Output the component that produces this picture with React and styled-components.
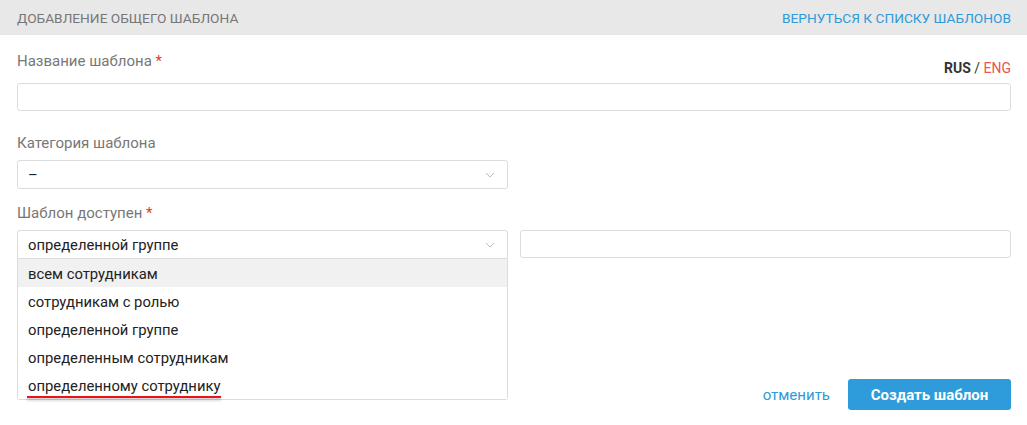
import React from "react";
import styled, { createGlobalStyle } from "styled-components";

const options = [
  "всем сотрудникам",
  "сотрудникам с ролью",
  "определенной группе",
  "определенным сотрудникам",
  "определенному сотруднику",
];

function Chevron() {
  return (
    <ChevronIcon width="10" height="6" viewBox="0 0 10 6">
      <path d="M1 1l4 4 4-4" fill="none" stroke="#bdbdbd" strokeWidth="1" />
    </ChevronIcon>
  );
}

export default function App() {
  return (
    <Page>
      <GlobalStyle />
      <Header>
        <HeaderTitle>Добавление общего шаблона</HeaderTitle>
        <BackLink>Вернуться к списку шаблонов</BackLink>
      </Header>
      <Form>
        <LabelRow>
          <Label>
            Название шаблона <Req>*</Req>
          </Label>
          <Lang>
            RUS <span>/</span> <Eng>ENG</Eng>
          </Lang>
        </LabelRow>
        <TextInput />

        <Label spaced>Категория шаблона</Label>
        <Half>
          <Select>
            <SelectValue>–</SelectValue>
            <Chevron />
          </Select>
        </Half>

        <Label spaced small>
          Шаблон доступен <Req>*</Req>
        </Label>
        <Pair>
          <SelectWrap>
            <Select open>
              <SelectValue>определенной группе</SelectValue>
              <Chevron />
            </Select>
            <Menu>
              {options.map((o, i) => (
                <Option key={o} active={i === 0}>
                  {i === options.length - 1 ? <Marked>{o}</Marked> : o}
                </Option>
              ))}
            </Menu>
          </SelectWrap>
          <TextInput />
        </Pair>

        <Footer>
          <CancelLink>отменить</CancelLink>
          <SubmitBtn>Создать шаблон</SubmitBtn>
        </Footer>
      </Form>
    </Page>
  );
}

const GlobalStyle = createGlobalStyle`
  body {
    margin: 0;
    background: #fff;
    font-family: Roboto, "Noto Sans", sans-serif;
  }
`;

const Page = styled.div`
  width: 1027px;
  height: 425px;
  overflow: hidden;
`;

const Header = styled.div`
  display: flex;
  justify-content: space-between;
  align-items: center;
  height: 35px;
  padding: 0 16px 0 17px;
  background: #e8e8e8;
`;

const HeaderTitle = styled.div`
  font-size: 13.7px;
  color: #777;
  text-transform: uppercase;
`;

const BackLink = styled.a`
  font-size: 13.7px;
  color: #2f9ad8;
  text-transform: uppercase;
  cursor: pointer;
`;

const Form = styled.div`
  padding: 16px 16px 0 17px;
`;

const LabelRow = styled.div`
  display: flex;
  justify-content: space-between;
  align-items: flex-end;
  height: 32px;
`;

const Label = styled.div`
  align-self: flex-start;
  font-size: 15px;
  line-height: 20px;
  color: #777;
  margin-top: ${(p) => (p.spaced ? (p.small ? "14px" : "22px") : "0")};
  margin-bottom: ${(p) => (p.spaced ? "7px" : "0")};
`;

const Req = styled.span`
  color: #e53935;
`;

const Lang = styled.div`
  font-size: 14px;
  line-height: 16px;
  font-weight: 700;
  color: #333;
  margin-bottom: 7px;
  span {
    font-weight: 400;
  }
`;

const Eng = styled.b`
  font-weight: 400;
  color: #f0524f;
`;

const TextInput = styled.input`
  display: block;
  box-sizing: border-box;
  width: 100%;
  height: 28px;
  border: 1px solid #dcdcdc;
  border-radius: 3px;
  outline: none;
`;

const Half = styled.div`
  width: 491px;
`;

const Pair = styled.div`
  display: grid;
  grid-template-columns: 491px 491px;
  gap: 12px;
  align-items: start;
`;

const SelectWrap = styled.div`
  position: relative;
`;

const Select = styled.div`
  display: flex;
  align-items: center;
  justify-content: space-between;
  box-sizing: border-box;
  height: 29px;
  padding: 1px 12px 0 10px;
  border: 1px solid #dcdcdc;
  border-radius: ${(p) => (p.open ? "3px 3px 0 0" : "3px")};
`;

const SelectValue = styled.span`
  font-size: 14.8px;
  color: #222;
`;

const ChevronIcon = styled.svg`
  display: block;
`;

const Menu = styled.div`
  position: absolute;
  top: 29px;
  left: 0;
  right: 0;
  box-sizing: border-box;
  border: 1px solid #dcdcdc;
  border-top: none;
  border-radius: 0 0 3px 3px;
  background: #fff;
  z-index: 2;
`;

const Option = styled.div`
  box-sizing: border-box;
  height: 28px;
  line-height: 28px;
  padding: 1px 0 0 10px;
  font-size: 14.8px;
  color: #222;
  background: ${(p) => (p.active ? "#f1f1f1" : "#fff")};
`;

const Marked = styled.span`
  position: relative;
  &::after {
    content: "";
    position: absolute;
    left: -1px;
    right: -1px;
    bottom: -3px;
    height: 2px;
    background: #e8131b;
    box-shadow: 0 2px 3px rgba(0, 0, 0, 0.3);
  }
`;

const Footer = styled.div`
  display: flex;
  justify-content: flex-end;
  align-items: center;
  gap: 18px;
  margin-top: 120px;
`;

const CancelLink = styled.a`
  font-size: 15px;
  color: #2f9ad8;
  cursor: pointer;
`;

const SubmitBtn = styled.button`
  width: 163px;
  height: 31px;
  border: none;
  border-radius: 3px;
  background: #2e9bda;
  color: #fff;
  font-family: Roboto, "Noto Sans", sans-serif;
  font-size: 15px;
  font-weight: 700;
`;
